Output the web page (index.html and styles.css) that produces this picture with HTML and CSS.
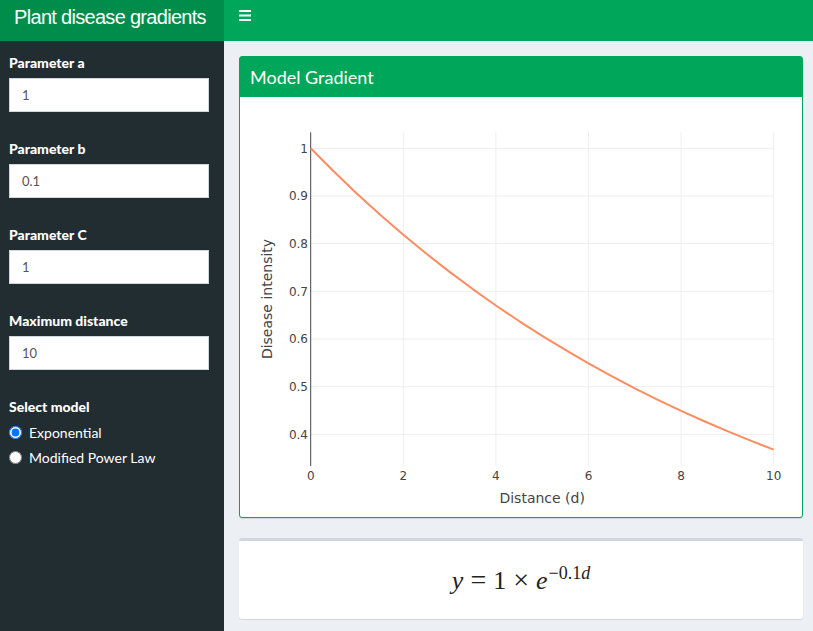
FILE: index.html
```html
<!DOCTYPE html>
<html>
<head>
<meta charset="utf-8">
<title>Plant disease gradients</title>
<link rel="stylesheet" href="styles.css">
</head>
<body>
<header class="header">
  <div class="logo">Plant disease gradients</div>
  <nav class="navbar">
    <a class="sidebar-toggle" href="#" aria-label="Toggle navigation">
      <svg width="12" height="11" viewBox="0 0 12 11"><rect x="0" y="0" width="12" height="2" fill="#fff"/><rect x="0" y="4.5" width="12" height="2" fill="#fff"/><rect x="0" y="9" width="12" height="2" fill="#fff"/></svg>
    </a>
  </nav>
</header>
<div class="main">
  <aside class="sidebar">
    <div class="form-group">
      <label class="control-label">Parameter a</label>
      <input class="form-control" type="text" value="1">
    </div>
    <div class="form-group">
      <label class="control-label">Parameter b</label>
      <input class="form-control" type="text" value="0.1">
    </div>
    <div class="form-group">
      <label class="control-label">Parameter C</label>
      <input class="form-control" type="text" value="1">
    </div>
    <div class="form-group">
      <label class="control-label">Maximum distance</label>
      <input class="form-control" type="text" value="10">
    </div>
    <div class="form-group">
      <label class="control-label">Select model</label>
      <label class="radio"><input type="radio" name="model" checked><span>Exponential</span></label>
      <label class="radio"><input type="radio" name="model"><span>Modified Power Law</span></label>
    </div>
  </aside>
  <main class="content">
    <section class="box box-solid">
      <div class="box-header"><h3 class="box-title">Model Gradient</h3></div>
      <div class="box-body plot-body">
        <svg class="plot" width="562" height="420" viewBox="0 0 562 420">
          <g class="grid">
            <line x1="163.3" y1="35.3" x2="163.3" y2="369"/>
            <line x1="255.9" y1="35.3" x2="255.9" y2="369"/>
            <line x1="348.5" y1="35.3" x2="348.5" y2="369"/>
            <line x1="441.1" y1="35.3" x2="441.1" y2="369"/>
            <line x1="533.7" y1="35.3" x2="533.7" y2="369"/>
            <line x1="70.7" y1="51.3" x2="533.7" y2="51.3"/>
            <line x1="70.7" y1="99" x2="533.7" y2="99"/>
            <line x1="70.7" y1="146.6" x2="533.7" y2="146.6"/>
            <line x1="70.7" y1="194.3" x2="533.7" y2="194.3"/>
            <line x1="70.7" y1="242" x2="533.7" y2="242"/>
            <line x1="70.7" y1="289.7" x2="533.7" y2="289.7"/>
            <line x1="70.7" y1="337.3" x2="533.7" y2="337.3"/>
          </g>
          <line class="axis" x1="70.7" y1="35.3" x2="70.7" y2="369"/>
          <polyline class="curve" points="70.7,51.3 93.85,74.55 117,96.66 140.15,117.7 163.3,137.71 186.45,156.74 209.6,174.85 232.75,192.07 255.9,208.46 279.05,224.04 302.2,238.87 325.35,252.97 348.5,266.38 371.65,279.14 394.8,291.28 417.95,302.82 441.1,313.8 464.25,324.25 487.4,334.19 510.55,343.64 533.7,352.63"/>
          <g class="yticks">
            <text x="68" y="55.5">1</text>
            <text x="68" y="103.2">0.9</text>
            <text x="68" y="150.8">0.8</text>
            <text x="68" y="198.5">0.7</text>
            <text x="68" y="246.2">0.6</text>
            <text x="68" y="293.9">0.5</text>
            <text x="68" y="341.5">0.4</text>
          </g>
          <g class="xticks">
            <text x="70.7" y="383">0</text>
            <text x="163.3" y="383">2</text>
            <text x="255.9" y="383">4</text>
            <text x="348.5" y="383">6</text>
            <text x="441.1" y="383">8</text>
            <text x="533.7" y="383">10</text>
          </g>
          <text class="axis-title" x="302.2" y="406">Distance (d)</text>
          <text class="axis-title" transform="translate(32 202) rotate(-90)" x="0" y="0">Disease intensity</text>
        </svg>
      </div>
    </section>
    <section class="box box-default">
      <div class="box-body formula-body">
        <div class="formula"><i>y</i><span class="op">=</span>1<span class="op">×</span><i>e</i><sup>−0.1<i>d</i></sup></div>
      </div>
    </section>
  </main>
</div>
</body>
</html>
```
FILE: styles.css
```css
html, body {
  margin: 0;
  padding: 0;
}
body {
  width: 813px;
  height: 631px;
  overflow: hidden;
  font-family: Lato, "Open Sans", sans-serif;
  font-size: 14px;
  color: #333;
  background: #ecf0f5;
}
.header {
  display: flex;
  height: 41px;
}
.logo {
  width: 224px;
  height: 41px;
  background: #008d4c;
  color: #fff;
  font-family: "Liberation Sans", Arial, sans-serif;
  font-size: 20px;
  letter-spacing: -0.7px;
  line-height: 34px;
  text-align: center;
  box-sizing: border-box;
  padding-right: 4px;
}
.navbar {
  flex: 1;
  background: #00a65a;
  display: flex;
  align-items: flex-start;
}
.sidebar-toggle {
  display: block;
  padding: 10px 0 0 15px;
  line-height: 0;
}
.main {
  display: flex;
  height: 590px;
}
.sidebar {
  width: 224px;
  flex: none;
  background: #222d32;
  box-sizing: border-box;
  padding: 12px 15px 0 9px;
}
.form-group {
  margin-bottom: 27px;
}
.control-label {
  display: block;
  color: #fff;
  font-weight: 900;
  font-size: 14px;
  line-height: 20px;
  margin-bottom: 5px;
}
.form-control {
  display: block;
  width: 200px;
  height: 34px;
  box-sizing: border-box;
  border: 1px solid #d2d6de;
  border-radius: 0;
  padding: 0 12px;
  font-family: Lato, "Open Sans", sans-serif;
  font-size: 13px;
  color: #555;
  background: #fff;
  outline: none;
}
.radio {
  display: flex;
  align-items: center;
  height: 20px;
  margin-top: 5px;
  color: #fff;
  font-size: 14px;
}
.radio input {
  width: 13px;
  height: 13px;
  margin: 0 7px 0 0;
}
.content {
  flex: 1;
  padding: 15px 10px 15px 15px;
}
.box {
  background: #fff;
  border-radius: 3px;
  margin-bottom: 20px;
  box-shadow: 0 1px 1px rgba(0,0,0,0.1);
}
.box-solid {
  border: 1px solid #00a65a;
}
.box-header {
  background: #00a65a;
  padding: 10px;
}
.box-title {
  margin: 0;
  color: #fff;
  font-size: 18px;
  font-weight: 400;
  line-height: 20px;
}
.plot-body {
  height: 420px;
}
.plot {
  display: block;
}
.grid line {
  stroke: #eee;
  stroke-width: 1;
}
.axis {
  stroke: #444;
  stroke-width: 1;
}
.curve {
  fill: none;
  stroke: #fc8d62;
  stroke-width: 2;
  stroke-linejoin: round;
}
.plot text {
  font-family: "DejaVu Sans", Verdana, sans-serif;
  fill: #444;
}
.yticks text {
  font-size: 12px;
  text-anchor: end;
}
.xticks text {
  font-size: 12px;
  text-anchor: middle;
}
.axis-title {
  font-size: 14px;
  text-anchor: middle;
}
.box-default {
  border-top: 3px solid #d2d6de;
}
.formula-body {
  padding: 10px;
  height: 58px;
}
.formula {
  font-family: "Liberation Serif", "Times New Roman", serif;
  font-size: 26px;
  color: #222;
  text-align: center;
  line-height: 40px;
  margin-top: 9px;
}
.formula .op {
  margin: 0 7px;
  font-size: 28px;
}
.formula sup {
  font-size: 18px;
  line-height: 1;
  vertical-align: 10px;
  margin-left: 1px;
}
```
